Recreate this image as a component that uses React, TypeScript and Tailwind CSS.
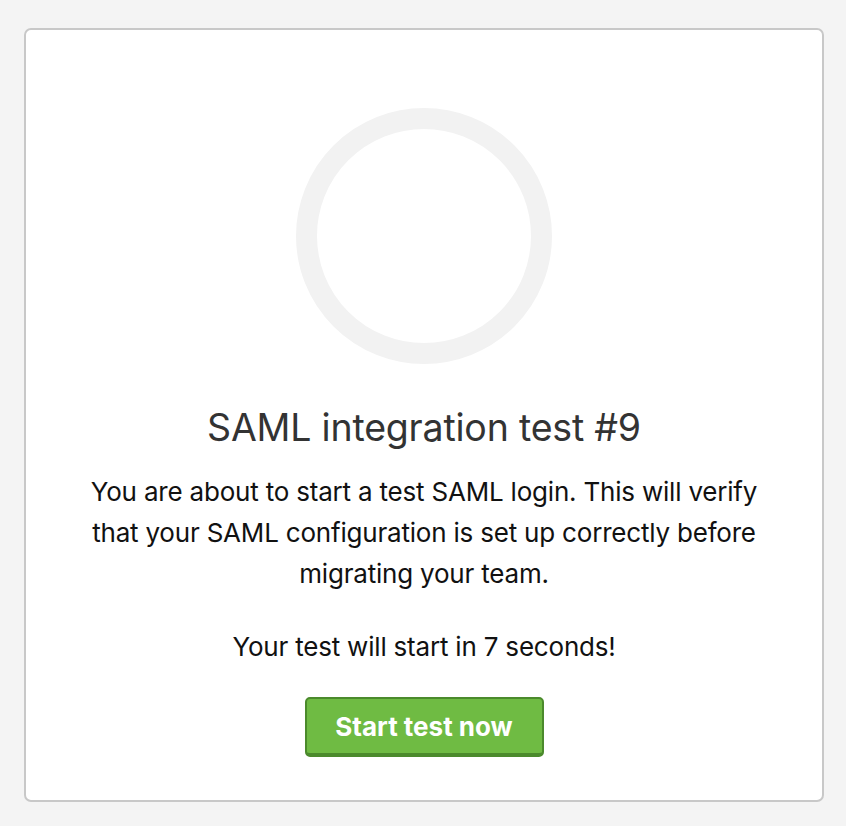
export default function App() {
  return (
    <div className="min-h-[826px] bg-[#f4f4f4] px-[24px] pt-[28px] pb-[24px] font-['Inter','Liberation_Sans',sans-serif]">
      <div className="w-[800px] h-[774px] bg-white border-2 border-[#c8c8c8] rounded-[7px] flex flex-col items-center">
        <div className="mt-[78px] w-[256px] h-[256px] rounded-full border-[21px] border-[#f2f2f2]" />
        <h1 className="mt-[42px] text-[37.5px] leading-[44px] text-[#333333] tracking-[-0.2px]">
          SAML integration test #9
        </h1>
        <p className="mt-[21px] w-[700px] text-center text-[26px] leading-[41px] text-[#111111] tracking-[-0.2px]">
          You are about to start a test SAML login. This will verify that your SAML configuration is set up correctly before migrating your team.
        </p>
        <p className="mt-[32px] text-[26px] leading-[41px] text-[#111111] tracking-[-0.2px]">
          Your test will start in 7 seconds!
        </p>
        <button className="mt-[30px] w-[239px] h-[60px] bg-[#6fbb43] border-2 border-b-4 border-[#4b8a2c] rounded-[5px] text-white text-[26px] font-bold">
          Start test now
        </button>
      </div>
    </div>
  );
}
